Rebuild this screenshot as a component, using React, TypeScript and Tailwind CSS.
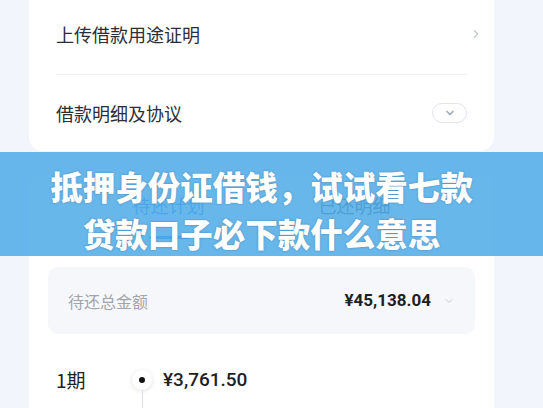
import { ChevronDown, ChevronRight } from 'lucide-react';

const cjk = { fontFamily: '"Noto Sans CJK SC", "Noto Sans", sans-serif' };
const num = { fontFamily: 'Roboto, "Noto Sans", "Noto Sans CJK SC", sans-serif' };

export default function App() {
  return (
    <div className="relative h-[408px] w-full overflow-hidden bg-[#f2f5fb]" style={cjk}>
      <div className="flex flex-col px-[29px] pr-[49px]">
        {/* 借款信息卡片 */}
        <div className="rounded-b-[14px] bg-white px-[27px]">
          <div className="flex h-[74px] items-center justify-between pb-[6px]">
            <span className="text-[18px] text-[#2b2e36]">上传借款用途证明</span>
            <ChevronRight className="mr-[-16px] h-[14px] w-[14px] text-[#c3c7d0]" strokeWidth={2} />
          </div>
          <div className="h-px bg-[#eef0f3]" />
          <div className="flex h-[76px] items-center justify-between">
            <span className="text-[18px] text-[#2b2e36]">借款明细及协议</span>
            <span className="flex h-[20px] w-[35px] items-center justify-center rounded-full border border-[#e1e4ec]">
              <ChevronDown className="h-[12px] w-[12px] text-[#a6abbb]" strokeWidth={3.5} />
            </span>
          </div>
        </div>

        {/* 还款计划卡片 */}
        <div className="mt-[24px] rounded-[14px] bg-white pb-6">
          <div className="mx-auto grid h-[68px] w-[372px] grid-cols-2 text-center text-[18px] leading-[20px]">
            <div className="flex flex-col items-center pt-[20px]">
              <span className="text-[#1677ff]">待还计划</span>
              <span className="mt-[21px] h-[3px] w-[40px] rounded-full bg-[#1677ff]" />
            </div>
            <div className="flex flex-col items-center pt-[20px]">
              <span className="text-[#333]">已还明细</span>
            </div>
          </div>

          <div className="mx-[19px] mt-[24px] flex h-[67px] items-center justify-between rounded-[10px] bg-[#f6f7fa] pl-[20px] pr-[20px]">
            <span className="text-[16px] text-[#a1a4ab]">待还总金额</span>
            <div className="flex items-center gap-[12px]">
              <span className="text-[17px] font-bold text-[#1d1f24]" style={num}>¥45,138.04</span>
              <ChevronDown className="h-[12px] w-[12px] text-[#c9ccd3]" strokeWidth={2} />
            </div>
          </div>

          <div className="mt-[33px] flex px-[27px]">
            <div className="flex w-[76px] flex-col">
              <span className="text-[19px] leading-[26px] text-[#1d1f24]">1期</span>
              <span className="mt-[14px] text-[13px] text-[#b0b3ba]" style={num}>2024/03/28</span>
            </div>
            <div className="flex w-[20px] flex-col items-center">
              <span className="mt-[3px] flex h-[20px] w-[20px] items-center justify-center rounded-full bg-white shadow-[0_1px_5px_rgba(0,0,0,0.12)]">
                <span className="h-[6px] w-[6px] rounded-full bg-[#111]" />
              </span>
              <span className="h-[40px] w-px bg-[#d9dce3]" />
            </div>
            <div className="ml-[11px] flex flex-col">
              <span className="text-[19px] font-medium leading-[26px] text-[#1d1f24]" style={num}>¥3,761.50</span>
              <span className="mt-[14px] text-[13px] text-[#b0b3ba]">本金 ¥3,500.00  利息 ¥261.50</span>
            </div>
          </div>
        </div>
      </div>

      {/* 标题横幅 */}
      <div className="absolute left-0 right-0 top-[152px] flex h-[104px] flex-col items-center justify-center bg-[#52ade8]/[0.88] pr-[20px] pt-[9px]">
        <p className="text-center text-[32.5px] font-black leading-[47px] text-white [text-shadow:0_0_2px_rgba(40,60,90,0.45)]">
          抵押身份证借钱，试试看七款
          <br />
          贷款口子必下款什么意思
        </p>
      </div>
    </div>
  );
}
